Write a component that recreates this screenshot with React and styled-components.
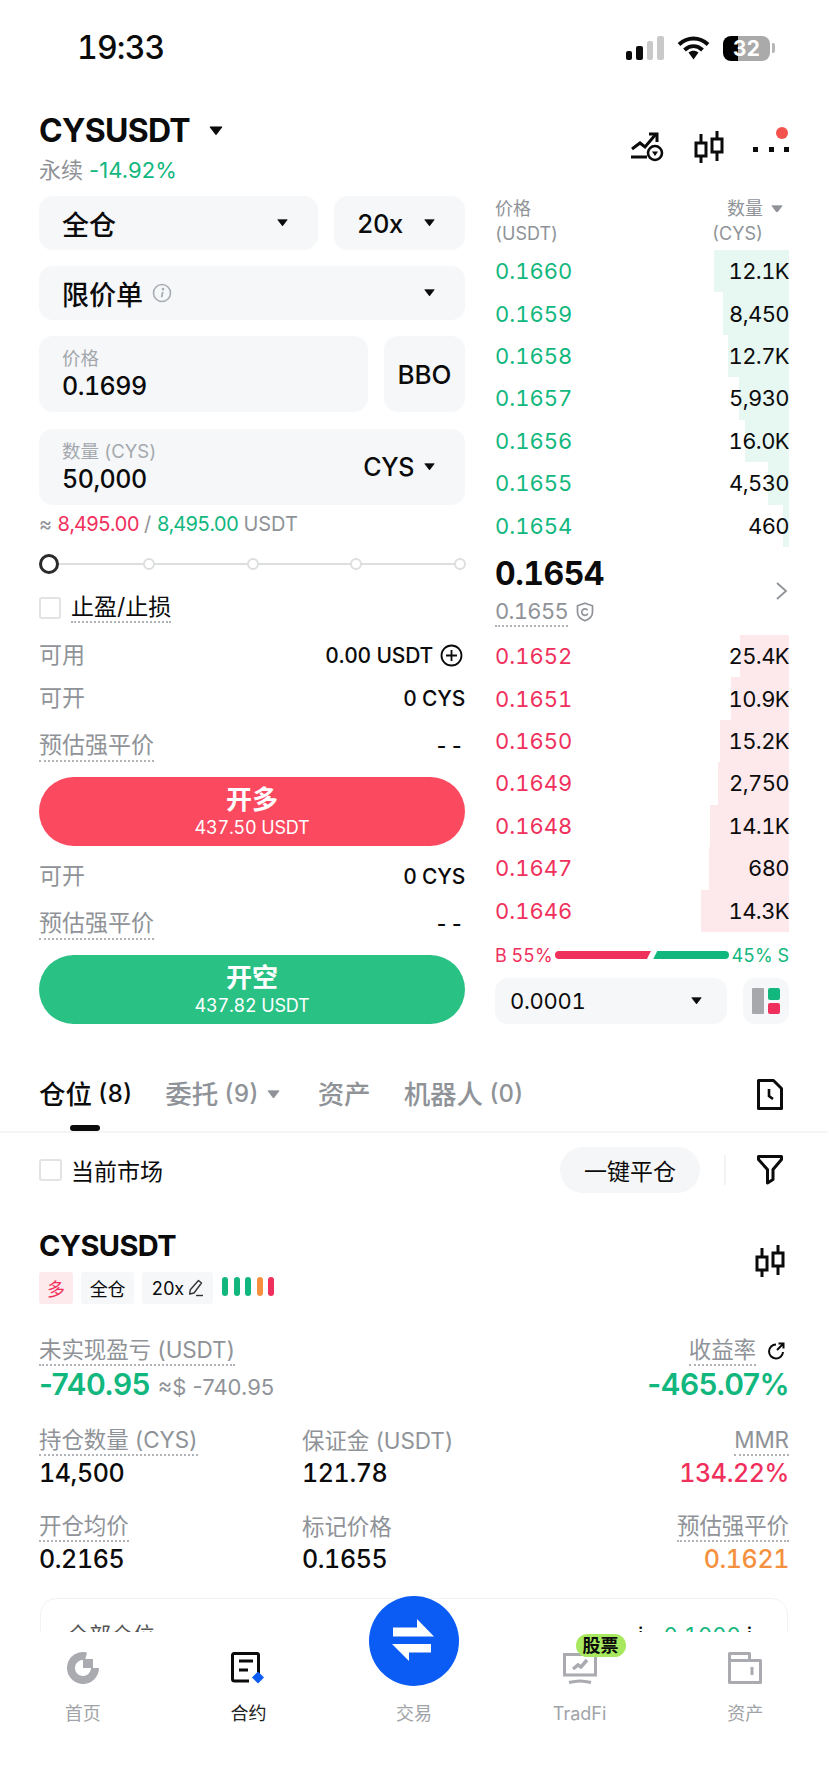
import React from 'react';
import styled, { createGlobalStyle } from 'styled-components';

const GREEN = '#12b77e';
const RED = '#f0305c';
const GREY = '#8f9398';
const FIELD = '#f5f7f9';

const GlobalStyle = createGlobalStyle`
	html, body {
		margin: 0;
		padding: 0;
		background: #fff;
	}
	body {
		font-family: Inter, "Noto Sans CJK SC", sans-serif;
		font-variant-numeric: tabular-nums;
		color: #0b0b0b;
	}
	* {
		box-sizing: border-box;
	}
`;

// price, quantity, width of the depth bar in px
const asks = [
	['0.1660', '12.1K', 75],
	['0.1659', '8,450', 66],
	['0.1658', '12.7K', 61],
	['0.1657', '5,930', 50],
	['0.1656', '16.0K', 44],
	['0.1655', '4,530', 21],
	['0.1654', '460', 6],
];

const bids = [
	['0.1652', '25.4K', 49],
	['0.1651', '10.9K', 58],
	['0.1650', '15.2K', 69],
	['0.1649', '2,750', 71],
	['0.1648', '14.1K', 79],
	['0.1647', '680', 80],
	['0.1646', '14.3K', 88],
];

const Caret = ({ size = 11, color = '#0b0b0b' }) => (
	<svg width={size} height={size * 0.66} viewBox="0 0 15 10">
		<path d="M1 1h13L7.500 9.500z" fill={color} stroke={color} strokeLinejoin="round" />
	</svg>
);

const CandleIcon = ({ width = 30, height = 32 }) => (
	<svg width={width} height={height} viewBox="0 0 30 32" fill="none" stroke="#0b0b0b" strokeWidth="3">
		<path d="M7 3v9M7 25v7M23 0v8M23 21v9" />
		<rect x="2" y="12" width="10" height="13" />
		<rect x="18" y="8" width="10" height="13" />
	</svg>
);

const TriggerIcon = () => (
	<svg width="34" height="32" viewBox="0 0 34 32" fill="none" stroke="#0b0b0b" strokeWidth="3">
		<path d="M1 26h16" />
		<path d="M2 18l8-6 5 4 11-13" />
		<path d="M19 3h8v8" />
		<circle cx="25" cy="22" r="7" strokeWidth="2.600" fill="#fff" />
		<path d="M22 20.500h6L25 25z" fill="#0b0b0b" stroke="none" />
	</svg>
);

const InfoIcon = () => (
	<svg width="20" height="20" viewBox="0 0 20 20" fill="none" stroke="#a9adb2" strokeWidth="1.600">
		<circle cx="10" cy="10" r="8.500" />
		<path d="M10.800 9l-1.200 5.200" strokeWidth="1.800" />
		<circle cx="11" cy="6.200" r="0.600" />
	</svg>
);

const PlusCircle = () => (
	<svg width="23" height="23" viewBox="0 0 23 23" fill="none" stroke="#0b0b0b" strokeWidth="1.800">
		<circle cx="11.500" cy="11.500" r="10" />
		<path d="M11.500 6v11M6 11.500h11" />
	</svg>
);

const ShieldIcon = () => (
	<svg width="18" height="20" viewBox="0 0 18 20" fill="none" stroke={GREY} strokeWidth="1.700">
		<path d="M9 1.200l7.500 2.600v6.400c0 4-3.400 6.900-7.500 8.600-4.100-1.700-7.500-4.600-7.500-8.600V3.800z" />
		<path d="M11.600 8.300a3.200 3.200 0 1 0 .3 3.200" />
	</svg>
);

const LayoutIcon = () => (
	<svg width="28" height="26" viewBox="0 0 28 26">
		<rect x="0" y="0" width="12" height="26" rx="1" fill="#a6a8ac" />
		<rect x="16" y="0" width="12" height="12" rx="2" fill={GREEN} />
		<rect x="16" y="15" width="12" height="11" rx="2" fill={RED} />
	</svg>
);

const RecordIcon = () => (
	<svg width="26" height="31" viewBox="0 0 26 31" fill="none" stroke="#0b0b0b" strokeWidth="3">
		<path d="M1.500 1.500h15l8 8v20h-23z" strokeLinejoin="round" />
		<path d="M12 10v7l4 3" strokeWidth="2.600" />
	</svg>
);

const FilterIcon = () => (
	<svg width="26" height="30" viewBox="0 0 26 30" fill="none" stroke="#0b0b0b" strokeWidth="3">
		<path d="M1.500 1.500h23v3L16 14.500v10L10.500 28V14.500L1.500 4.500z" strokeLinejoin="round" />
	</svg>
);

const PencilIcon = () => (
	<svg width="16" height="18" viewBox="0 0 16 18" fill="none" stroke="#333" strokeWidth="1.400">
		<path d="M10.500 1.500l3 2.500-7.500 10-4.300 1 .6-4.300z" strokeLinejoin="round" />
		<path d="M8 16.500h7" />
	</svg>
);

const ShareIcon = () => (
	<svg width="18" height="18" viewBox="0 0 18 18" fill="none" stroke="#0b0b0b" strokeWidth="2">
		<path d="M9 2.500a7 7 0 1 0 7 7.500" />
		<path d="M10 8l6-6M11.500 1.500H16.500V6.500" />
	</svg>
);

const HomeIcon = () => (
	<svg width="32" height="32" viewBox="0 0 32 32" fill="none">
		<path d="M28 16a12 12 0 1 1-9-11.600" stroke="#a9abb0" strokeWidth="8" />
		<rect x="16" y="7" width="10" height="9" fill="#a9abb0" />
	</svg>
);

const ContractIcon = () => (
	<svg width="34" height="34" viewBox="0 0 34 34" fill="none">
		<path d="M18 29H3.500a2 2 0 0 1-2-2V3a1.500 1.500 0 0 1 1.500-1.500h23A1.500 1.500 0 0 1 27.500 3v19" stroke="#0b0b0b" strokeWidth="3" />
		<path d="M8 9h14M8 18h9" stroke="#0b0b0b" strokeWidth="3" />
		<path d="M27 19.500l6 6-6 6-6-6z" fill="#0a5cf5" />
	</svg>
);

const SwapIcon = () => (
	<svg width="44" height="44" viewBox="0 0 44 44" fill="#fff">
		<path d="M1 8.500h24V0l17 17.500H1z" />
		<path d="M0 25h39v8.500H17V42z" />
	</svg>
);

const TradFiIcon = () => (
	<svg width="34" height="32" viewBox="0 0 34 32" fill="none" stroke="#a9abb0" strokeWidth="3">
		<path d="M1.500 23V2.500h31V23z" />
		<path d="M10 17l5-4 3 2 6-7" strokeWidth="3.500" />
		<path d="M6 30.500c7-2 15-2 22 0" strokeWidth="3" />
	</svg>
);

const WalletIcon = () => (
	<svg width="34" height="32" viewBox="0 0 34 32" fill="none" stroke="#a9abb0" strokeWidth="3">
		<path d="M1.500 30.500V1.500h20v7h11v22z" strokeLinejoin="round" />
		<path d="M1.500 8.500h20" />
		<path d="M24 15v8" />
	</svg>
);

const Row = ({ row, side }) => (
	<DepthRow>
		<DepthBar $side={side} style={{ width: `${row[2]}px` }} />
		<DepthPrice $side={side}>{row[0]}</DepthPrice>
		<DepthQty>{row[1]}</DepthQty>
	</DepthRow>
);

const App = () => (
	<Page>
		<GlobalStyle />
		<StatusBar>
			<Time>19:33</Time>
			<StatusIcons>
				<svg width="38" height="24" viewBox="0 0 38 24">
					<rect x="0" y="15" width="6" height="9" rx="2" fill="#0b0b0b" />
					<rect x="10" y="10" width="7" height="14" rx="2" fill="#0b0b0b" />
					<rect x="21" y="5" width="6" height="19" rx="2" fill="#c9c9c9" />
					<rect x="31" y="0" width="7" height="24" rx="2" fill="#c9c9c9" />
				</svg>
				<svg width="33" height="24" viewBox="0 0 33 24" fill="none" stroke="#0b0b0b" strokeWidth="4">
					<path d="M2 8.500c8.500-8 20.500-8 29 0" />
					<path d="M7.500 14c5.500-5 12.500-5 18 0" />
					<path d="M11.500 16.500l5 7 5-7c-3-2.500-7-2.500-10 0z" fill="#0b0b0b" stroke="none" />
				</svg>
				<Battery>32</Battery>
				<BatteryNub />
			</StatusIcons>
		</StatusBar>

		<Header>
			<div>
				<SymbolLine>
					CYSUSDT
					<Caret size={14} />
				</SymbolLine>
				<SubLine>
					永续 <ChangeText>-14.92%</ChangeText>
				</SubLine>
			</div>
			<HeaderIcons>
				<TriggerIcon />
				<CandleIcon />
				<MoreIcon>
					<MoreDot />
					<MoreDot />
					<MoreDot />
					<RedDot />
				</MoreIcon>
			</HeaderIcons>
		</Header>

		<Main>
			<OrderColumn>
				<FieldRow>
					<SelectBox $grow>
						全仓
						<Caret />
					</SelectBox>
					<SelectBox $width="131px" $small>
						20x
						<Caret />
					</SelectBox>
				</FieldRow>
				<FieldRow $top="16px">
					<SelectBox $grow>
						<InlineText>
							限价单 <InfoIcon />
						</InlineText>
						<Caret />
					</SelectBox>
				</FieldRow>
				<FieldRow $top="16px">
					<InputBox $grow>
						<div>
							<InputLabel>价格</InputLabel>
							<InputValue>0.1699</InputValue>
						</div>
					</InputBox>
					<BboButton>BBO</BboButton>
				</FieldRow>
				<FieldRow $top="17px">
					<InputBox $grow>
						<div>
							<InputLabel>数量 (CYS)</InputLabel>
							<InputValue>50,000</InputValue>
						</div>
						<UnitPicker>
							CYS
							<Caret />
						</UnitPicker>
					</InputBox>
				</FieldRow>
				<CostLine>
					≈ <CostRed>8,495.00</CostRed> / <CostGreen>8,495.00</CostGreen> USDT
				</CostLine>
				<Slider>
					<SliderKnob />
					<SliderDot />
					<SliderDot />
					<SliderDot />
					<SliderDot />
				</Slider>
				<CheckRow>
					<CheckBox />
					<Dotted $dark>止盈/止损</Dotted>
				</CheckRow>
				<InfoRow $top="21px">
					<InfoLabel>可用</InfoLabel>
					<InfoValue>
						0.00 USDT <PlusCircle />
					</InfoValue>
				</InfoRow>
				<InfoRow $top="13px">
					<InfoLabel>可开</InfoLabel>
					<InfoValue>0 CYS</InfoValue>
				</InfoRow>
				<InfoRow $top="17px">
					<InfoLabel>
						<Dotted>预估强平价</Dotted>
					</InfoLabel>
					<InfoDash>--</InfoDash>
				</InfoRow>
				<TradeButton $color="#fb4a60">
					<TradeTitle>开多</TradeTitle>
					<TradeAmount>437.50 USDT</TradeAmount>
				</TradeButton>
				<InfoRow $top="15px">
					<InfoLabel>可开</InfoLabel>
					<InfoValue>0 CYS</InfoValue>
				</InfoRow>
				<InfoRow $top="17px">
					<InfoLabel>
						<Dotted>预估强平价</Dotted>
					</InfoLabel>
					<InfoDash>--</InfoDash>
				</InfoRow>
				<TradeButton $color="#2ac185">
					<TradeTitle>开空</TradeTitle>
					<TradeAmount>437.82 USDT</TradeAmount>
				</TradeButton>
			</OrderColumn>

			<BookColumn>
				<BookHead>
					<div>
						价格
						<br />
						(USDT)
					</div>
					<BookHeadRight>
						<QtyTitle>
							数量 <Caret size={12} color="#8f9398" />
						</QtyTitle>
						<CysUnit>(CYS)</CysUnit>
					</BookHeadRight>
				</BookHead>
				<DepthList>
					{asks.map((row) => (
						<Row key={row[0]} row={row} side="ask" />
					))}
				</DepthList>
				<MidBlock>
					<div>
						<LastPrice>0.1654</LastPrice>
						<MarkPrice>
							<Dotted>0.1655</Dotted>
							<ShieldIcon />
						</MarkPrice>
					</div>
					<svg width="13" height="20" viewBox="0 0 13 20" fill="none" stroke="#8f9398" strokeWidth="1.800">
						<path d="M2 2l9 8-9 8" />
					</svg>
				</MidBlock>
				<DepthList>
					{bids.map((row) => (
						<Row key={row[0]} row={row} side="bid" />
					))}
				</DepthList>
				<RatioRow>
					<Red>B 55%</Red>
					<RatioBar $color={RED} $left $width="96px" />
					<RatioBar $color={GREEN} $width="76px" />
					<Green>45% S</Green>
				</RatioRow>
				<TickRow>
					<TickSelect>
						0.0001
						<Caret />
					</TickSelect>
					<LayoutButton>
						<LayoutIcon />
					</LayoutButton>
				</TickRow>
			</BookColumn>
		</Main>

		<Tabs>
			<Tab $active>
				仓位 <TabCount>(8)</TabCount>
				<TabMark />
			</Tab>
			<Tab>
				委托 <TabCount>(9)</TabCount>
				<TabCaret>
					<Caret size={13} color="#8f9398" />
				</TabCaret>
			</Tab>
			<Tab>资产</Tab>
			<Tab>
				机器人 <TabCount>(0)</TabCount>
			</Tab>
			<TabIcon>
				<RecordIcon />
			</TabIcon>
		</Tabs>

		<FilterRow>
			<CheckBox $tall />
			<FilterLabel>当前市场</FilterLabel>
			<ClosePill>一键平仓</ClosePill>
			<FilterDivider />
			<FilterIcon />
		</FilterRow>

		<PositionHead>
			<div>
				<PositionName>CYSUSDT</PositionName>
				<TagRow>
					<Tag $pink>多</Tag>
					<Tag>全仓</Tag>
					<Tag>
						20x <PencilIcon />
					</Tag>
					<RiskBars>
						<RiskBar $color={GREEN} />
						<RiskBar $color={GREEN} />
						<RiskBar $color={GREEN} />
						<RiskBar $color="#f5913e" />
						<RiskBar $color={RED} />
					</RiskBars>
				</TagRow>
			</div>
			<PositionChart>
				<CandleIcon />
			</PositionChart>
		</PositionHead>

		<PnlRow>
			<div>
				<StatLabel>
					<Dotted>未实现盈亏 (USDT)</Dotted>
				</StatLabel>
				<PnlValue>
					-740.95 <PnlFiat>≈$ -740.95</PnlFiat>
				</PnlValue>
			</div>
			<PnlRight>
				<StatLabel>
					<Dotted>收益率</Dotted>
					<ShareBox>
						<ShareIcon />
					</ShareBox>
				</StatLabel>
				<PnlValue>-465.07%</PnlValue>
			</PnlRight>
		</PnlRow>

		<StatGrid>
			<div>
				<StatLabel>
					<Dotted>持仓数量 (CYS)</Dotted>
				</StatLabel>
				<StatValue>14,500</StatValue>
			</div>
			<div>
				<StatLabel>保证金 (USDT)</StatLabel>
				<StatValue>121.78</StatValue>
			</div>
			<StatRight>
				<StatLabel>
					<Dotted>MMR</Dotted>
				</StatLabel>
				<StatValue $color={RED}>134.22%</StatValue>
			</StatRight>
			<div>
				<StatLabel>
					<Dotted>开仓均价</Dotted>
				</StatLabel>
				<StatValue>0.2165</StatValue>
			</div>
			<div>
				<StatLabel>标记价格</StatLabel>
				<StatValue>0.1655</StatValue>
			</div>
			<StatRight>
				<StatLabel>
					<Dotted>预估强平价</Dotted>
				</StatLabel>
				<StatValue $color="#f5913e">0.1621</StatValue>
			</StatRight>
		</StatGrid>

		<SummaryCard>
			<span>全部仓位</span>
			<SummaryValue>
				i <Green>-0.1000</Green> i
			</SummaryValue>
		</SummaryCard>

		<TabBar>
			<NavItem>
				<NavIconBox>
					<HomeIcon />
				</NavIconBox>
				首页
			</NavItem>
			<NavItem $active>
				<NavIconBox>
					<ContractIcon />
				</NavIconBox>
				合约
			</NavItem>
			<NavItem>
				<SwapButton>
					<SwapIcon />
				</SwapButton>
				<NavIconBox />
				交易
			</NavItem>
			<NavItem>
				<NavIconBox>
					<TradFiIcon />
					<StockBadge>股票</StockBadge>
				</NavIconBox>
				TradFi
			</NavItem>
			<NavItem>
				<NavIconBox>
					<WalletIcon />
				</NavIconBox>
				资产
			</NavItem>
		</TabBar>
	</Page>
);

const Page = styled.div`
	position: relative;
	width: 828px;
	height: 1792px;
	overflow: hidden;
	background: #fff;
`;

const Green = styled.span`
	color: ${GREEN};
`;

const Red = styled.span`
	color: ${RED};
`;

const Dotted = styled.span`
	color: ${(p) => (p.$dark ? '#0b0b0b' : 'inherit')};
	padding-bottom: 1px;
	border-bottom: 2px dotted #b0b3b7;
`;

const StatusBar = styled.div`
	height: 97px;
	padding: 30px 53px 0 78px;
	display: flex;
	justify-content: space-between;
	align-items: flex-start;
`;

const Time = styled.div`
	font-size: 32px;
	font-weight: 500;
	line-height: 36px;
	letter-spacing: -0.8px;
	margin-left: -1px;
`;

const StatusIcons = styled.div`
	display: flex;
	align-items: center;
	gap: 13px;
	height: 36px;
`;

const Battery = styled.div`
	width: 47px;
	height: 25px;
	margin-right: -11px;
	border-radius: 8px;
	background: linear-gradient(90deg, #000 31%, #aaa 31%);
	color: #fff;
	font-size: 21px;
	font-weight: 700;
	line-height: 25px;
	text-align: center;
`;

const BatteryNub = styled.div`
	width: 3px;
	height: 10px;
	border-radius: 0 2px 2px 0;
	background: #b8b8b8;
`;

const Header = styled.div`
	height: 99px;
	padding: 14px 39px 0;
	display: flex;
	justify-content: space-between;
	align-items: flex-start;
`;

const SymbolLine = styled.div`
	display: flex;
	align-items: center;
	gap: 19px;
	font-size: 32px;
	font-weight: 700;
	line-height: 40px;
	letter-spacing: -0.7px;
`;

const SubLine = styled.div`
	margin-top: 5px;
	font-size: 22px;
	line-height: 28px;
	color: ${GREY};
`;

const ChangeText = styled(Green)`
	font-variant-numeric: proportional-nums;
	letter-spacing: 0.1px;
`;

const HeaderIcons = styled.div`
	display: flex;
	align-items: flex-start;
	gap: 28px;
	margin-top: 20px;

	svg:first-child {
		margin-right: 2px;
	}
`;

const MoreIcon = styled.div`
	position: relative;
	width: 37px;
	height: 32px;
	display: flex;
	align-items: flex-end;
	justify-content: space-between;
	padding: 0 0 11px 1px;
`;

const MoreDot = styled.span`
	width: 5px;
	height: 5px;
	background: #0b0b0b;
`;

const RedDot = styled.span`
	position: absolute;
	top: -4px;
	right: 1px;
	width: 12px;
	height: 12px;
	border-radius: 50%;
	background: #f4534d;
`;

const Main = styled.div`
	display: grid;
	grid-template-columns: 426px 294px;
	gap: 30px;
	padding: 0 39px;
`;

const OrderColumn = styled.div`
	display: flex;
	flex-direction: column;
`;

const FieldRow = styled.div`
	display: flex;
	gap: 16px;
	margin-top: ${(p) => p.$top || '0'};
`;

const SelectBox = styled.div`
	flex: ${(p) => (p.$grow ? '1' : 'none')};
	width: ${(p) => p.$width || 'auto'};
	height: 54px;
	padding: 0 30px 0 ${(p) => (p.$grow ? '23px' : '23px')};
	display: flex;
	align-items: center;
	justify-content: space-between;
	border-radius: 14px;
	background: ${FIELD};
	font-size: ${(p) => (p.$small ? '25.5px' : '27px')};
	font-weight: 500;
	letter-spacing: ${(p) => (p.$small ? '-0.5px' : '0')};
`;

const InlineText = styled.span`
	display: flex;
	align-items: center;
	gap: 9px;
`;

const InputBox = styled.div`
	flex: 1;
	height: 76px;
	padding: 0 30px 0 23px;
	display: flex;
	align-items: center;
	justify-content: space-between;
	border-radius: 14px;
	background: ${FIELD};
`;

const InputLabel = styled.div`
	font-size: 18.5px;
	line-height: 24px;
	color: #a4a8ad;
`;

const InputValue = styled.div`
	font-size: 25px;
	font-weight: 500;
	line-height: 32px;
	letter-spacing: -0.5px;
`;

const BboButton = styled.div`
	width: 81px;
	height: 76px;
	display: flex;
	align-items: center;
	justify-content: center;
	border-radius: 14px;
	background: ${FIELD};
	font-size: 26px;
	font-weight: 500;
`;

const UnitPicker = styled.div`
	display: flex;
	align-items: center;
	gap: 10px;
	font-size: 25px;
	font-weight: 500;
	letter-spacing: -0.4px;
`;

const CostLine = styled.div`
	margin-top: 7px;
	font-size: 20px;
	line-height: 24px;
	color: ${GREY};
`;

const CostRed = styled(Red)`
	letter-spacing: -0.9px;
`;

const CostGreen = styled(Green)`
	letter-spacing: -0.9px;
`;

const Slider = styled.div`
	position: relative;
	margin-top: 18px;
	height: 20px;
	display: flex;
	align-items: center;
	gap: 91.5px;

	&::before {
		content: '';
		position: absolute;
		left: 0;
		right: 0;
		top: 9px;
		height: 2px;
		background: #dcdee0;
	}
`;

const SliderKnob = styled.span`
	position: relative;
	flex: none;
	width: 20px;
	height: 20px;
	margin-right: -7.5px;
	border: 3.5px solid #2a2a2a;
	border-radius: 50%;
	background: #fff;
`;

const SliderDot = styled.span`
	position: relative;
	flex: none;
	width: 12px;
	height: 12px;
	border: 2px solid #dcdee0;
	border-radius: 50%;
	background: #fff;
`;

const CheckRow = styled.div`
	margin-top: 23px;
	display: flex;
	align-items: center;
	gap: 10px;
	height: 22px;
	font-size: 23px;
	line-height: 26px;
`;

const CheckBox = styled.span`
	flex: none;
	width: ${(p) => (p.$tall ? '23px' : '22px')};
	height: 22px;
	border: 2px solid #e1e3e5;
	border-radius: 3px;
	background: #fff;
`;

const InfoRow = styled.div`
	margin-top: ${(p) => p.$top};
	height: 30px;
	display: flex;
	align-items: center;
	justify-content: space-between;
`;

const InfoLabel = styled.div`
	font-size: 23px;
	line-height: 28px;
	color: ${GREY};
`;

const InfoValue = styled.div`
	display: flex;
	align-items: center;
	gap: 7px;
	font-size: 21px;
	font-weight: 500;
	letter-spacing: -0.2px;

	svg {
		margin-right: 2px;
	}
`;

const InfoDash = styled.div`
	font-size: 21px;
	font-weight: 500;
	letter-spacing: 1.5px;
`;

const TradeButton = styled.div`
	margin-top: 17px;
	height: 69px;
	display: flex;
	flex-direction: column;
	align-items: center;
	justify-content: center;
	border-radius: 35px;
	background: ${(p) => p.$color};
	color: #fff;
`;

const TradeTitle = styled.div`
	font-size: 26px;
	font-weight: 700;
	line-height: 33px;
`;

const TradeAmount = styled.div`
	font-size: 18px;
	line-height: 24px;
	letter-spacing: -0.2px;
`;

const BookColumn = styled.div`
	display: flex;
	flex-direction: column;
`;

const BookHead = styled.div`
	height: 54px;
	display: flex;
	justify-content: space-between;
	font-size: 18px;
	line-height: 25px;
	color: ${GREY};
`;

const BookHeadRight = styled.div`
	display: flex;
	flex-direction: column;
	align-items: flex-end;
	padding-right: 6px;
	white-space: nowrap;
`;

const QtyTitle = styled.span`
	display: flex;
	align-items: center;
	gap: 8px;
`;

const CysUnit = styled.span`
	margin-right: 20px;
`;

const DepthList = styled.div`
	height: 297px;
	display: flex;
	flex-direction: column;
`;

const DepthRow = styled.div`
	position: relative;
	flex: 1;
	display: flex;
	align-items: center;
	justify-content: space-between;
	font-size: 22px;
`;

const DepthBar = styled.span`
	position: absolute;
	top: 0;
	right: 0;
	bottom: 0;
	background: ${(p) => (p.$side === 'ask' ? '#e7f7f1' : '#fde9ec')};
`;

const DepthPrice = styled.span`
	position: relative;
	color: ${(p) => (p.$side === 'ask' ? GREEN : RED)};
`;

const DepthQty = styled.span`
	position: relative;
	letter-spacing: -0.6px;
`;

const MidBlock = styled.div`
	height: 88px;
	display: flex;
	justify-content: space-between;
	align-items: center;
	padding-right: 1px;
`;

const LastPrice = styled.div`
	font-size: 32px;
	font-weight: 700;
	line-height: 36px;
	letter-spacing: -0.5px;
`;

const MarkPrice = styled.div`
	display: flex;
	align-items: center;
	gap: 8px;
	margin-top: 6px;
	font-size: 22px;
	line-height: 26px;
	letter-spacing: -0.7px;
	color: ${GREY};
`;

const RatioRow = styled.div`
	margin-top: 11px;
	height: 24px;
	display: flex;
	align-items: center;
	justify-content: space-between;
	font-size: 18px;
	white-space: nowrap;
`;

const RatioBar = styled.span`
	flex: none;
	width: ${(p) => p.$width};
	height: 8px;
	background: ${(p) => p.$color};
	border-radius: ${(p) => (p.$left ? '4px 0 0 4px' : '0 4px 4px 0')};
	clip-path: ${(p) =>
		p.$left
			? 'polygon(0 0, 100% 0, calc(100% - 4px) 100%, 0 100%)'
			: 'polygon(4px 0, 100% 0, 100% 100%, 0 100%)'};
`;

const TickRow = styled.div`
	margin-top: 11px;
	display: flex;
	justify-content: space-between;
`;

const TickSelect = styled.div`
	width: 232px;
	height: 46px;
	padding: 0 25px 0 15px;
	display: flex;
	align-items: center;
	justify-content: space-between;
	border-radius: 13px;
	background: ${FIELD};
	font-size: 22px;
	letter-spacing: -0.3px;
`;

const LayoutButton = styled.div`
	width: 46px;
	height: 46px;
	display: flex;
	align-items: center;
	justify-content: center;
	border-radius: 12px;
	background: ${FIELD};
`;

const Tabs = styled.div`
	position: relative;
	height: 109px;
	padding: 54px 45px 0 39px;
	display: flex;
	align-items: flex-start;
	gap: 33px;
	border-bottom: 2px solid #f5f5f5;
`;

const Tab = styled.div`
	position: relative;
	display: flex;
	align-items: center;
	gap: 6px;
	font-size: 26.5px;
	font-weight: 500;
	line-height: 32px;
	color: ${(p) => (p.$active ? '#0b0b0b' : GREY)};
	white-space: nowrap;
`;

const TabCount = styled.span`
	font-size: 24px;
`;

const TabCaret = styled.span`
	display: flex;
	margin: 0 5px 0 2px;
`;

const TabMark = styled.span`
	position: absolute;
	left: 31px;
	top: 47px;
	width: 30px;
	height: 6px;
	border-radius: 3px;
	background: #0b0b0b;
`;

const TabIcon = styled.div`
	margin-left: auto;
	margin-top: 1px;
`;

const FilterRow = styled.div`
	margin-top: 14px;
	height: 46px;
	padding: 0 45px 0 39px;
	display: flex;
	align-items: center;
`;

const FilterLabel = styled.span`
	margin-left: 9px;
	font-size: 23px;
`;

const ClosePill = styled.div`
	margin-left: auto;
	width: 140px;
	height: 46px;
	display: flex;
	align-items: center;
	justify-content: center;
	border-radius: 23px;
	background: #f5f6f7;
	font-size: 23px;
`;

const FilterDivider = styled.span`
	width: 2px;
	height: 30px;
	margin: 0 31px 0 24px;
	background: #f3f3f3;
`;

const PositionHead = styled.div`
	margin-top: 33px;
	padding: 0 43px 0 39px;
	display: flex;
	align-items: center;
	justify-content: space-between;
`;

const PositionChart = styled.div`
	margin-bottom: 5px;
`;

const PositionName = styled.div`
	font-size: 29px;
	font-weight: 700;
	line-height: 40px;
	letter-spacing: -0.6px;
`;

const TagRow = styled.div`
	margin-top: 6px;
	height: 32px;
	display: flex;
	gap: 8px;
`;

const Tag = styled.span`
	height: 32px;
	padding: 0 ${(p) => (p.$pink ? '8px' : '9px')};
	display: flex;
	align-items: center;
	gap: 4px;
	border-radius: 3px;
	background: ${(p) => (p.$pink ? '#fdeaed' : FIELD)};
	color: ${(p) => (p.$pink ? RED : '#0b0b0b')};
	font-size: 18px;
	letter-spacing: -0.2px;
`;

const RiskBars = styled.div`
	margin: 5px 0 0 1px;
	height: 19px;
	display: flex;
	gap: 5.5px;
`;

const RiskBar = styled.span`
	width: 6px;
	height: 19px;
	border-radius: 3px;
	background: ${(p) => p.$color};
`;

const PnlRow = styled.div`
	margin-top: 33px;
	padding: 0 39px;
	display: flex;
	justify-content: space-between;
`;

const PnlRight = styled.div`
	display: flex;
	flex-direction: column;
	align-items: flex-end;
`;

const StatLabel = styled.div`
	display: flex;
	align-items: center;
	gap: 11px;
	height: 28px;
	font-size: 22.5px;
	line-height: 26px;
	letter-spacing: -0.1px;
	color: ${GREY};
`;

const ShareBox = styled.span`
	display: flex;
	margin-right: 4px;
`;

const PnlValue = styled.div`
	display: flex;
	align-items: baseline;
	gap: 8px;
	height: 39px;
	font-size: 30px;
	font-weight: 600;
	font-variant-numeric: proportional-nums;
	line-height: 38px;
	letter-spacing: -0.6px;
	color: ${GREEN};
`;

const PnlFiat = styled.span`
	font-size: 22px;
	font-weight: 400;
	letter-spacing: 0;
	color: ${GREY};
`;

const StatGrid = styled.div`
	margin-top: 23px;
	padding: 0 39px;
	display: grid;
	grid-template-columns: 263px 1fr auto;
	row-gap: 24px;
`;

const StatRight = styled.div`
	display: flex;
	flex-direction: column;
	align-items: flex-end;
`;

const StatValue = styled.div`
	margin-top: 2px;
	height: 32px;
	font-size: 25px;
	font-weight: 500;
	line-height: 32px;
	letter-spacing: -0.4px;
	color: ${(p) => p.$color || '#0b0b0b'};
`;

const SummaryCard = styled.div`
	margin: 23px 40px 0;
	padding: 25px 35px 0 26px;
	height: 120px;
	display: flex;
	justify-content: space-between;
	border: 1px solid #f3f3f3;
	border-radius: 16px;
	font-size: 22px;
	line-height: 22px;
	color: #555;
`;

const SummaryValue = styled.span`
	font-size: 22px;
	color: #0b0b0b;
`;

const TabBar = styled.div`
	position: absolute;
	left: 0;
	right: 0;
	top: 1632px;
	height: 160px;
	padding-top: 20px;
	display: flex;
	align-items: flex-start;
	background: #fff;
`;

const NavItem = styled.div`
	position: relative;
	flex: 1;
	display: flex;
	flex-direction: column;
	align-items: center;
	font-size: 18px;
	line-height: 24px;
	color: ${(p) => (p.$active ? '#222' : '#a0a3a7')};
`;

const NavIconBox = styled.div`
	position: relative;
	height: 34px;
	margin-bottom: 16px;
	display: flex;
	justify-content: center;
`;

const SwapButton = styled.div`
	position: absolute;
	left: 50%;
	top: -56px;
	width: 90px;
	height: 90px;
	margin-left: -45px;
	display: flex;
	align-items: center;
	justify-content: center;
	border-radius: 50%;
	background: #0a5cf5;
`;

const StockBadge = styled.span`
	position: absolute;
	left: 13px;
	top: -18px;
	width: 50px;
	height: 23px;
	border-radius: 12px;
	background: #a8e85e;
	color: #0b0b0b;
	font-size: 18px;
	font-weight: 700;
	line-height: 23px;
	text-align: center;
`;

export default App;
